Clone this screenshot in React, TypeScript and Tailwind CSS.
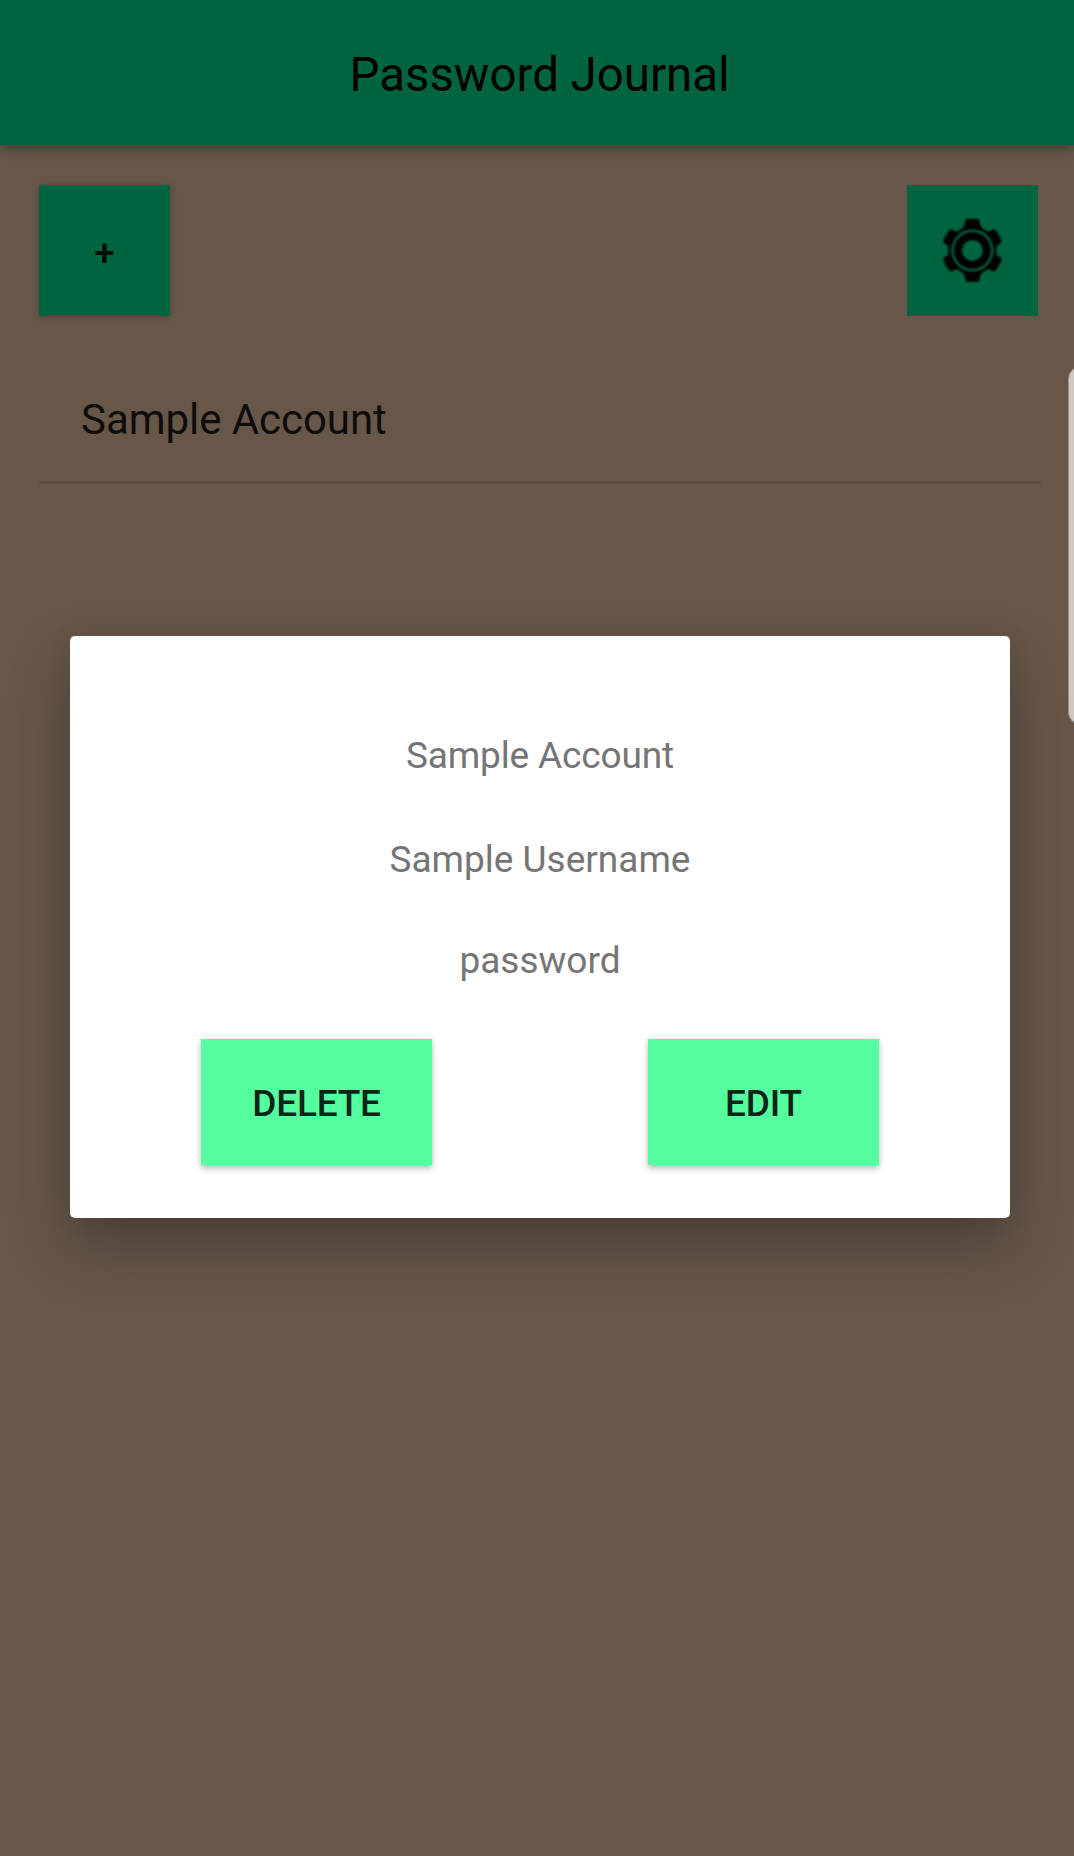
import type { ReactNode } from "react";

const TEETH = [0, 60, 120, 180, 240, 300];

function GearIcon() {
  return (
    <svg width="64" height="64" viewBox="-31.4 -31.4 64 64" aria-hidden="true" className="blur-[0.8px]">
      {TEETH.map((angle) => (
        <path
          key={angle}
          transform={`rotate(${angle})`}
          d={
            angle % 180 === 0
              ? "M-11 -20 L-7.8 -25.5 L-6.6 -31.3 H6.6 L7.8 -25.5 L11 -20 Z"
              : "M-11 -20 L-7.8 -24 L-8.3 -27 Q-8 -29.6 -5 -30.4 H5 Q8 -29.6 8.3 -27 L7.8 -24 L11 -20 Z"
          }
        />
      ))}
      <circle r="22.6" fill="none" stroke="#000" strokeWidth="3.2" />
      <circle r="21" fill="#00653e" />
      <circle r="14.5" fill="none" stroke="#000" strokeWidth="8" />
    </svg>
  );
}

function DialogButton({ children }: { children: ReactNode }) {
  return (
    <button className="flex h-[126px] w-[231px] items-center justify-center bg-[#55ff9f] pt-[2px] text-[37px] font-medium leading-none tracking-[-0.2px] text-[#0c2417] shadow-[0_4px_6px_rgba(0,0,0,0.22),0_0_5px_rgba(0,0,0,0.1)]">
      {children}
    </button>
  );
}

export default function App() {
  return (
    <div className="relative h-[1856px] w-[1074px] overflow-hidden bg-[#675749] font-['Roboto',sans-serif]">
      <header className="flex h-[146px] items-center justify-center bg-[#00653e] pl-[5px] pt-[5px] shadow-[0_3px_10px_rgba(0,0,0,0.35)]">
        <h1 className="text-[47.4px] leading-none text-black">Password Journal</h1>
      </header>

      <main className="pl-[39px] pr-[33px] pt-[39px]">
        <div className="flex justify-between pr-[3px]">
          <button className="flex size-[131px] items-center justify-center bg-[#00653e] pt-[6px] text-[37px] font-medium leading-none text-[#020f09] shadow-[0_1px_6px_rgba(0,0,0,0.25)]">
            +
          </button>
          <button aria-label="Settings" className="flex size-[131px] items-center justify-center bg-[#00653e]">
            <GearIcon />
          </button>
        </div>
        <ul className="mt-[39px]">
          <li className="flex h-[129px] items-center border-b-[3px] border-[#5c4d40] pl-[42px] pt-1 text-[42px] leading-none tracking-[-0.05px] text-[#0f0d0b]">
            Sample Account
          </li>
        </ul>
      </main>

      <div className="absolute right-[-20px] top-[366px] h-[359px] w-[26px] rounded-[14px] border border-[#9a918a] bg-[#d0c9c4]" />

      <section
        role="dialog"
        className="absolute left-[70px] top-[636px] flex h-[582px] w-[940px] flex-col items-center rounded-[5px] bg-white pt-[98px] text-[37px] text-[#757575] shadow-[0_28px_60px_rgba(0,0,0,0.28),0_0_28px_rgba(0,0,0,0.06)]"
      >
        <p className="h-[104px] leading-[44px] tracking-[-0.15px]">Sample Account</p>
        <p className="h-[101px] leading-[44px]">Sample Username</p>
        <p className="h-[100px] leading-[44px]">password</p>
        <div className="flex w-full justify-between px-[131px]">
          <DialogButton>DELETE</DialogButton>
          <DialogButton>EDIT</DialogButton>
        </div>
      </section>
    </div>
  );
}
